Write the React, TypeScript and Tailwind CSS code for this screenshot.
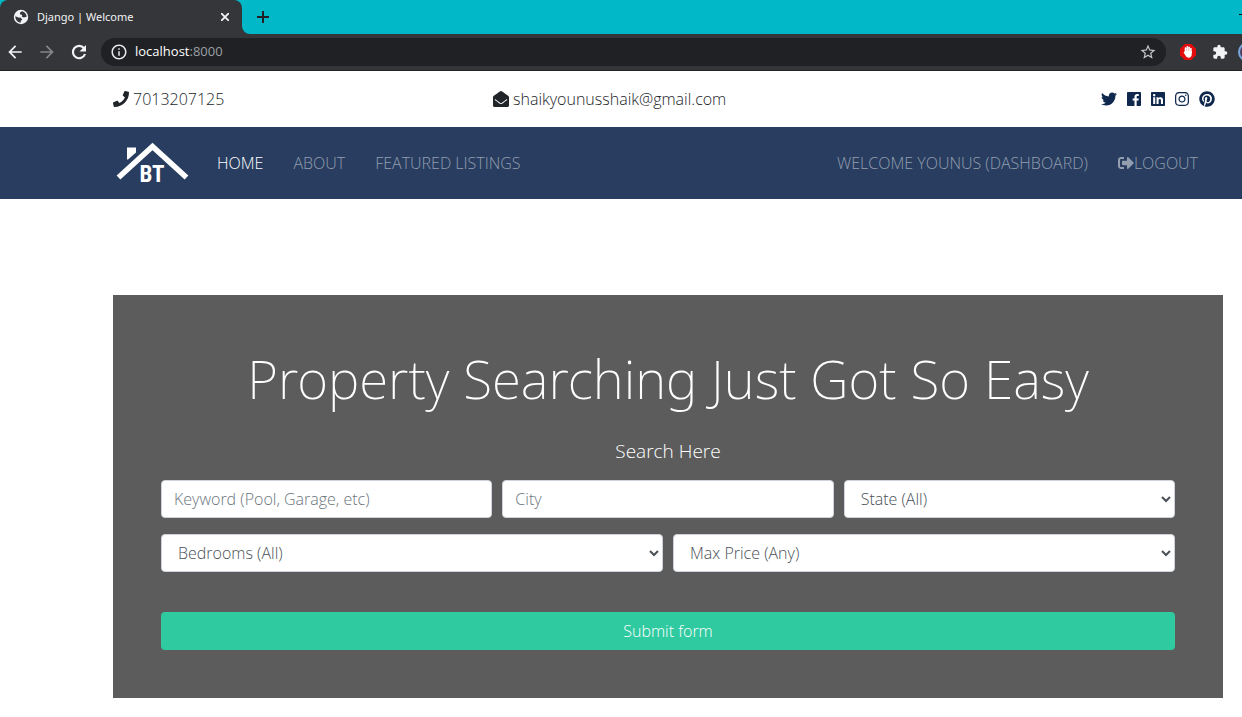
import type { ReactNode } from "react";
import {
  FaEnvelopeOpen,
  FaInstagram,
  FaLinkedin,
  FaPhone,
  FaPinterest,
  FaSignOutAlt,
  FaTwitter,
} from "react-icons/fa";
import {
  MdArrowBack,
  MdArrowForward,
  MdExtension,
  MdInfoOutline,
  MdStarBorder,
} from "react-icons/md";

function FacebookIcon() {
  return (
    <svg viewBox="0 0 448 512" className="h-4 w-[14px]" fill="currentColor" aria-hidden="true">
      <path d="M448 56.7v398.5c0 13.7-11.1 24.7-24.7 24.7H309.1V306.5h58.2l8.7-67.6h-67v-43.2c0-19.6 5.4-32.9 33.5-32.9h35.8v-60.5c-6.2-.8-27.4-2.7-52.2-2.7-51.6 0-87 31.5-87 89.4v49.9h-58.4v67.6h58.4V480H24.7C11.1 480 0 468.9 0 455.3V56.7C0 43.1 11.1 32 24.7 32h398.5c13.7 0 24.8 11.1 24.8 24.7z" />
    </svg>
  );
}

function GlobeIcon() {
  return (
    <svg viewBox="0 0 16 16" className="size-4" aria-hidden="true">
      <circle cx="8" cy="8" r="7.200" fill="#f1f3f4" />
      <path
        d="M9 2.300 7 3.500v1.800L9.300 6l-.6 1.500 2 .9 3-.6c-.1-2.600-1.900-4.900-4.700-5.500zM2.300 7.300l3.200 1.200 2.400.3 1.400 1.900-1.500 1-.2 2C4.700 13.500 2.200 11 2.300 7.300z"
        fill="#35363a"
      />
    </svg>
  );
}

function ReloadIcon() {
  return (
    <svg viewBox="0 0 20 20" className="size-5" aria-hidden="true">
      <path d="M15 6.200A6.200 6.200 0 1 0 16 12" fill="none" stroke="currentColor" strokeWidth="2.200" />
      <path d="M17 3v6.500h-6.500z" fill="currentColor" />
    </svg>
  );
}

function Logo() {
  return (
    <svg viewBox="0 0 76 48" className="h-12 w-[76px]" fill="#fff" role="img" aria-label="BT Real Estate">
      <path d="M13 8.500h9v5l-8 7h-1z" />
      <path d="M4.500 38.500 38.500 7.500 72.500 38.500" fill="none" stroke="#fff" strokeWidth="5.500" />
      <text
        x="38"
        y="43"
        textAnchor="middle"
        fontFamily="'Roboto Condensed', 'Liberation Sans', sans-serif"
        fontWeight="700"
        fontSize="23"
      >
        BT
      </text>
    </svg>
  );
}

function AdBlockIcon() {
  return (
    <svg viewBox="0 0 16 16" className="size-4" aria-hidden="true">
      <path d="M4.700 0h6.600L16 4.700v6.600L11.300 16H4.700L0 11.300V4.700z" fill="#e40d0d" />
      <g stroke="#fff" strokeWidth="1.600" strokeLinecap="round" fill="none">
        <path d="M5.500 8V4M7.300 8V2.800M9.100 8V3.200M10.900 9V4.600" />
      </g>
      <path d="M4.700 7h7v3.500c0 1.700-1.100 3.200-3 3.200-1.600 0-2.500-.7-3.200-2.100L3.500 8.600l.9-.5z" fill="#fff" />
    </svg>
  );
}

function BrowserChrome() {
  return (
    <header className="overflow-hidden bg-[#35363a]">
      <div className="flex h-[34px] bg-[#35363a]">
        <div className="flex w-[242px] shrink-0 bg-[#00b8c7]">
          <div className="flex w-full items-center rounded-t-lg bg-[#35363a] pl-[13px] pr-[9px]">
            <GlobeIcon />
            <span className="ml-2 flex-1 font-['Noto_Sans',sans-serif] text-[11px] text-[#f1f3f4]">Django | Welcome</span>
            <button type="button" aria-label="Close tab" className="p-1 text-[#f1f3f4]">
              <svg viewBox="0 0 8 8" className="size-2" stroke="currentColor" strokeWidth="1.800">
                <path d="M0 0l8 8M8 0L0 8" />
              </svg>
            </button>
          </div>
        </div>
        <div className="flex flex-1 items-center justify-between rounded-bl-lg bg-[#00b8c7] pl-[15px]">
          <button type="button" aria-label="New tab" className="text-[#202124]">
            <svg viewBox="0 0 12 12" className="size-3" stroke="currentColor" strokeWidth="2">
              <path d="M6 0v12M0 6h12" />
            </svg>
          </button>
          <button type="button" aria-label="Minimize" className="mb-[5px] h-px w-[3px] bg-black" />
        </div>
      </div>
      <div className="flex h-9 items-center pl-[5px]">
        <div className="flex shrink-0 gap-3 text-[#f1f3f4]">
          <button type="button" aria-label="Back"><MdArrowBack className="size-5" /></button>
          <button type="button" aria-label="Forward" className="text-[#85868a]"><MdArrowForward className="size-5" /></button>
          <button type="button" aria-label="Reload"><ReloadIcon /></button>
        </div>
        <div className="ml-3 flex h-7 flex-1 items-center rounded-full bg-[#202124] pl-[9px] pr-[9px]">
          <MdInfoOutline className="size-[18px] text-[#e8eaed]" />
          <span className="ml-[7px] flex-1 text-[13px] text-white">
            localhost<span className="text-[#9aa0a6]">:8000</span>
          </span>
          <button type="button" aria-label="Bookmark"><MdStarBorder className="size-[18px] text-[#c4c7ca]" /></button>
        </div>
        <button type="button" aria-label="Ad blocker" className="ml-[14px]"><AdBlockIcon /></button>
        <button type="button" aria-label="Extensions" className="ml-4"><MdExtension className="size-4 text-[#f1f3f4]" /></button>
        <div className="ml-[10px] w-1 shrink-0 overflow-hidden">
          <div className="size-5 rounded-full border-2 border-[#7aa7dc] bg-[#4b3f63]" />
        </div>
      </div>
      <div className="h-px bg-[#242124]" />
    </header>
  );
}

function NavLink({ active, children }: { active?: boolean; children: ReactNode }) {
  return (
    <a href="#" className={active ? "flex items-center text-white" : "flex items-center text-[#939eaf]"}>
      {children}
    </a>
  );
}

const control =
  "h-[38px] w-full rounded border border-[#ced4da] bg-white px-3 py-[6px] text-[16px] text-[#495057] placeholder:text-[#6c757d]";

function Select({ label }: { label: string }) {
  return (
    <select aria-label={label} className={control}>
      <option>{label}</option>
    </select>
  );
}

export default function App() {
  return (
    <div className="min-h-screen bg-white font-['Open_Sans',sans-serif]">
      <BrowserChrome />

      <div className="grid h-14 grid-cols-3 items-center gap-[30px] pl-[113px] pr-[19px] text-[16px] font-light text-[#212529]">
        <div className="flex items-center gap-1"><FaPhone />7013207125</div>
        <div className="flex items-center gap-1"><FaEnvelopeOpen />shaikyounusshaik@gmail.com</div>
        <div className="flex items-center justify-end gap-[10px] pr-2 text-[#10284e]">
          <a href="#" aria-label="Twitter"><FaTwitter /></a>
          <a href="#" aria-label="Facebook"><FacebookIcon /></a>
          <a href="#" aria-label="LinkedIn"><FaLinkedin className="h-4 w-[14px]" /></a>
          <a href="#" aria-label="Instagram"><FaInstagram className="h-4 w-[14px]" /></a>
          <a href="#" aria-label="Pinterest"><FaPinterest /></a>
        </div>
      </div>

      <nav className="flex h-[72px] items-center bg-[#283d60] pl-[114px] pr-11 text-[16px] font-light">
        <a href="#"><Logo /></a>
        <div className="ml-[27px] flex flex-1 gap-[30px]">
          <NavLink active>HOME</NavLink>
          <NavLink>ABOUT</NavLink>
          <NavLink>FEATURED LISTINGS</NavLink>
        </div>
        <div className="flex gap-[30px]">
          <NavLink>WELCOME YOUNUS (DASHBOARD)</NavLink>
          <NavLink><FaSignOutAlt />LOGOUT</NavLink>
        </div>
      </nav>

      <main className="pb-[19px] pl-[113px] pr-[19px] pt-24">
        <section className="bg-[#5c5c5c] p-12 text-center font-light text-white">
          <h1 className="font-['Noto_Sans',sans-serif] text-[53px] font-extralight leading-[72px]">Property Searching Just Got So Easy</h1>
          <p className="mt-5 text-[19px] leading-8">Search Here</p>
          <form className="mt-[13px]">
            <div className="grid grid-cols-3 gap-[10px]">
              <input type="text" aria-label="Keyword" placeholder="Keyword (Pool, Garage, etc)" className={control} />
              <input type="text" aria-label="City" placeholder="City" className={control} />
              <Select label="State (All)" />
            </div>
            <div className="mt-4 grid grid-cols-2 gap-[10px]">
              <Select label="Bedrooms (All)" />
              <Select label="Max Price (Any)" />
            </div>
            <button type="submit" className="mt-10 h-[38px] w-full rounded bg-[#30caa0] text-[16px]">
              Submit form
            </button>
          </form>
        </section>
      </main>
    </div>
  );
}
